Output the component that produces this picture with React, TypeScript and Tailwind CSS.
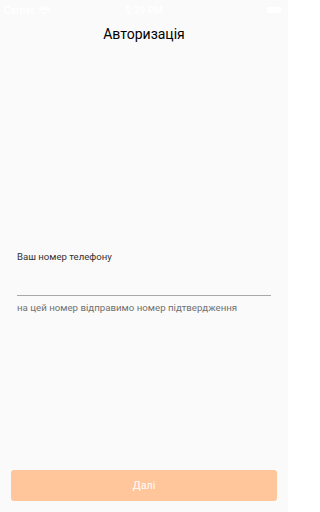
import React from "react";

export default function App() {
  return (
    <div
      className="w-[288px] h-[512px] bg-[#fafafa] flex flex-col overflow-hidden"
      style={{ fontFamily: "Roboto, 'Noto Sans', sans-serif" }}
    >
      <div className="h-[20px] flex items-center justify-between px-[4px] text-white text-[10px] font-semibold relative">
        <div className="flex items-center gap-[3px]">
          <span>Carrier</span>
          <svg width="12" height="9" viewBox="0 0 12 9" fill="white">
            <path d="M6 9 L8 6.6 A3 3 0 0 0 4 6.6 Z M6 3.5 A5.5 5.5 0 0 1 10 5.2 L11 4 A7 7 0 0 0 1 4 L2 5.2 A5.5 5.5 0 0 1 6 3.5 Z M6 0 A9.5 9.5 0 0 1 12.5 2.6 L11.6 3.6 A8 8 0 0 0 0.4 3.6 L-0.5 2.6 A9.5 9.5 0 0 1 6 0 Z" />
          </svg>
        </div>
        <span className="absolute left-1/2 -translate-x-1/2">5:39 PM</span>
        <div className="w-[14px] h-[6px] bg-white rounded-[1px] mr-[3px]" />
      </div>
      <div className="h-[28px] flex items-center justify-center text-[14px] text-black">
        Авторизація
      </div>
      <div className="mt-[203px] px-[17px]">
        <div className="text-[9.6px] leading-[12px] text-[#333]">Ваш номер телефону</div>
        <div className="mt-[32px] h-[1px] bg-[#a8a8a8] w-[254px]" />
        <div className="mt-[6px] text-[9.7px] leading-[12px] text-[#707070]">
          на цей номер відправимо номер підтвердження
        </div>
      </div>
      <div className="flex-1" />
      <div className="px-[11px] mb-[11px]">
        <button className="w-full h-[31px] rounded-[3px] bg-[#ffc59b] text-white text-[10.6px] flex items-center justify-center">
          Далі
        </button>
      </div>
    </div>
  );
}
